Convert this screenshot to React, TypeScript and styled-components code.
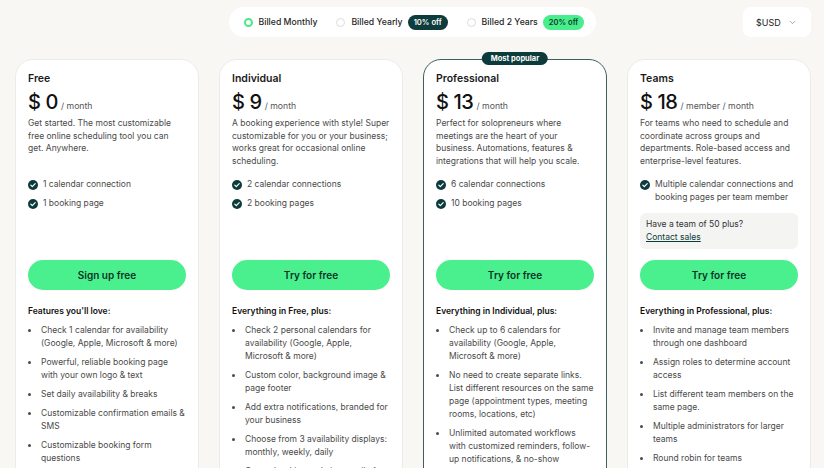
import styled, { createGlobalStyle } from "styled-components"

const GlobalStyle = createGlobalStyle`
  html, body {
    margin: 0;
    padding: 0;
    background: #f8f7f4;
    font-family: Inter, "Noto Sans", Arial, sans-serif;
    color: #1a1a1a;
    -webkit-font-smoothing: antialiased;
  }
`

type Plan = {
  name: string
  price: string
  unit: string
  desc: string
  checks: string[]
  cta: string
  heading: string
  features: string[]
  popular?: boolean
  contact?: boolean
}

const plans: Plan[] = [
  {
    name: "Free",
    price: "0",
    unit: "/ month",
    desc: "Get started. The most customizable free online scheduling tool you can get. Anywhere.",
    checks: ["1 calendar connection", "1 booking page"],
    cta: "Sign up free",
    heading: "Features you'll love:",
    features: [
      "Check 1 calendar for availability (Google, Apple, Microsoft & more)",
      "Powerful, reliable booking page with your own logo & text",
      "Set daily availability & breaks",
      "Customizable confirmation emails & SMS",
      "Customizable booking form questions",
    ],
  },
  {
    name: "Individual",
    price: "9",
    unit: "/ month",
    desc: "A booking experience with style! Super customizable for you or your business; works great for occasional online scheduling.",
    checks: ["2 calendar connections", "2 booking pages"],
    cta: "Try for free",
    heading: "Everything in Free, plus:",
    features: [
      "Check 2 personal calendars for availability (Google, Apple, Microsoft & more)",
      "Custom color, background image & page footer",
      "Add extra notifications, branded for your business",
      "Choose from 3 availability displays: monthly, weekly, daily",
      "Create booking websites easily for any business",
    ],
  },
  {
    name: "Professional",
    price: "13",
    unit: "/ month",
    desc: "Perfect for solopreneurs where meetings are the heart of your business. Automations, features & integrations that will help you scale.",
    checks: ["6 calendar connections", "10 booking pages"],
    cta: "Try for free",
    heading: "Everything in Individual, plus:",
    features: [
      "Check up to 6 calendars for availability (Google, Apple, Microsoft & more)",
      "No need to create separate links. List different resources on the same page (appointment types, meeting rooms, locations, etc)",
      "Unlimited automated workflows with customized reminders, follow-up notifications, & no-show",
    ],
    popular: true,
  },
  {
    name: "Teams",
    price: "18",
    unit: "/ member / month",
    desc: "For teams who need to schedule and coordinate across groups and departments. Role-based access and enterprise-level features.",
    checks: ["Multiple calendar connections and booking pages per team member"],
    cta: "Try for free",
    heading: "Everything in Professional, plus:",
    features: [
      "Invite and manage team members through one dashboard",
      "Assign roles to determine account access",
      "List different team members on the same page.",
      "Multiple administrators for larger teams",
      "Round robin for teams",
    ],
    contact: true,
  },
]

const CheckIcon = () => (
  <svg width="10" height="10" viewBox="0 0 20 20">
    <circle cx="10" cy="10" r="10" fill="#0d3b3b" />
    <path d="M5.6 10.3l3 3 5.8-6" fill="none" stroke="#fff" strokeWidth="2.4" strokeLinecap="round" strokeLinejoin="round" />
  </svg>
)

const Chevron = () => (
  <svg width="9" height="9" viewBox="0 0 24 24" fill="none" stroke="#8a8a8a" strokeWidth="2" strokeLinecap="round" strokeLinejoin="round">
    <path d="M6 9l6 6 6-6" />
  </svg>
)

const App = () => {
  return (
    <>
      <GlobalStyle />
      <Page>
        <Header>
          <Toggle>
            <Option>
              <Radio $active />
              Billed Monthly
            </Option>
            <Option>
              <Radio />
              Billed Yearly
              <Badge $tone="dark">10% off</Badge>
            </Option>
            <Option>
              <Radio />
              Billed 2 Years
              <Badge $tone="green">20% off</Badge>
            </Option>
          </Toggle>
          <Currency>
            $USD
            <Chevron />
          </Currency>
        </Header>

        <Cards>
          {plans.map((p) => (
            <Card key={p.name} $popular={p.popular}>
              {p.popular && <Popular>Most popular</Popular>}
              <Top>
                <Name>{p.name}</Name>
                <PriceRow>
                  <Amount>$ {p.price}</Amount>
                  <Unit>{p.unit}</Unit>
                </PriceRow>
                <Desc>{p.desc}</Desc>
                <CheckList>
                  {p.checks.map((c) => (
                    <CheckItem key={c}>
                      <CheckIcon />
                      <span>{c}</span>
                    </CheckItem>
                  ))}
                </CheckList>
                {p.contact && (
                  <ContactBox>
                    Have a team of 50 plus?
                    <ContactLink href="#">Contact sales</ContactLink>
                  </ContactBox>
                )}
              </Top>
              <Cta>{p.cta}</Cta>
              <FeatHeading>{p.heading}</FeatHeading>
              <Features>
                {p.features.map((f) => (
                  <li key={f}>{f}</li>
                ))}
              </Features>
            </Card>
          ))}
        </Cards>
      </Page>
    </>
  )
}

export default App

const Page = styled.div`
  width: 824px;
  height: 468px;
  overflow: hidden;
`

const Header = styled.div`
  height: 59px;
  position: relative;
  display: flex;
  justify-content: center;
  padding-top: 7px;
  box-sizing: border-box;
`

const Toggle = styled.div`
  height: 30px;
  background: #fff;
  border-radius: 15px;
  display: flex;
  align-items: center;
  gap: 19px;
  padding: 0 14px 0 15px;
  box-sizing: border-box;
  width: 367px;
`

const Option = styled.div`
  display: flex;
  align-items: center;
  gap: 5px;
  font-size: 8.7px;
  font-weight: 500;
  color: #1f1f1f;
  white-space: nowrap;
`

const Radio = styled.span<{ $active?: boolean }>`
  width: 9px;
  height: 9px;
  border-radius: 50%;
  box-sizing: border-box;
  background: #fff;
  border: ${(p) => (p.$active ? "2.5px solid #4ae88a" : "1px solid #dcdcdc")};
  margin-right: 1px;
`

const Badge = styled.span<{ $tone: "dark" | "green" }>`
  font-size: 7.6px;
  font-weight: 600;
  padding: 3px 6px;
  border-radius: 8px;
  background: ${(p) => (p.$tone === "dark" ? "#0e3b3b" : "#48ee8c")};
  color: ${(p) => (p.$tone === "dark" ? "#fff" : "#0e3b2c")};
`

const Currency = styled.div`
  position: absolute;
  right: 13px;
  top: 7px;
  width: 68px;
  height: 30px;
  box-sizing: border-box;
  background: #fff;
  border-radius: 8px;
  display: flex;
  align-items: center;
  justify-content: space-between;
  padding: 0 14px 0 13px;
  font-size: 9px;
  color: #222;
`

const Cards = styled.div`
  display: grid;
  grid-template-columns: repeat(4, 184px);
  gap: 20px;
  padding-left: 15px;
`

const Card = styled.div<{ $popular?: boolean }>`
  position: relative;
  background: #fff;
  border: 1px solid ${(p) => (p.$popular ? "#3c5f5f" : "#ebebea")};
  border-radius: 18px;
  padding: 12px 12px 0 12px;
  height: 440px;
  box-sizing: border-box;
  display: flex;
  flex-direction: column;
`

const Popular = styled.div`
  position: absolute;
  top: -8px;
  left: 50%;
  transform: translateX(-50%);
  background: #0d3b3b;
  color: #fff;
  font-size: 7.5px;
  font-weight: 700;
  padding: 2px 9px;
  border-radius: 7px;
  white-space: nowrap;
`

const Top = styled.div`
  height: 188px;
  display: flex;
  flex-direction: column;
`

const Name = styled.div`
  font-size: 10.5px;
  font-weight: 600;
  color: #1a1a1a;
  line-height: 14px;
`

const PriceRow = styled.div`
  display: flex;
  align-items: baseline;
  gap: 3px;
  margin-top: 3px;
`

const Amount = styled.span`
  font-size: 20px;
  font-weight: 500;
  letter-spacing: -0.4px;
  color: #111;
  line-height: 26px;
`

const Unit = styled.span`
  font-size: 8.7px;
  color: #555;
`

const Desc = styled.p`
  margin: 2px 0 0;
  font-size: 8.5px;
  line-height: 12.7px;
  color: #4a4a4a;
  min-height: 51px;
`

const CheckList = styled.div`
  margin-top: 10px;
  display: flex;
  flex-direction: column;
  gap: 6px;
`

const CheckItem = styled.div`
  display: flex;
  align-items: flex-start;
  gap: 5px;
  font-size: 8.5px;
  line-height: 13px;
  color: #4a4a4a;

  svg {
    flex: none;
    margin-top: 1.5px;
  }
`

const ContactBox = styled.div`
  margin-top: 9px;
  background: #f4f4f3;
  border-radius: 6px;
  padding: 5px 6px;
  display: flex;
  flex-direction: column;
  font-size: 8.5px;
  line-height: 13px;
  color: #333;
`

const ContactLink = styled.a`
  color: #0d3b3b;
  text-decoration: underline;
`

const Cta = styled.button`
  height: 30px;
  width: 100%;
  border: none;
  border-radius: 15px;
  background: #4bf08e;
  color: #0c3326;
  font-family: inherit;
  font-size: 10px;
  font-weight: 600;
  cursor: pointer;
`

const FeatHeading = styled.div`
  margin-top: 15px;
  font-size: 8.5px;
  font-weight: 600;
  color: #111;
  line-height: 13px;
`

const Features = styled.ul`
  margin: 6px 0 0;
  padding-left: 12px;
  font-size: 8.5px;
  line-height: 13px;
  color: #4a4a4a;

  li {
    margin-bottom: 6px;
    padding-left: 1px;
  }
`
